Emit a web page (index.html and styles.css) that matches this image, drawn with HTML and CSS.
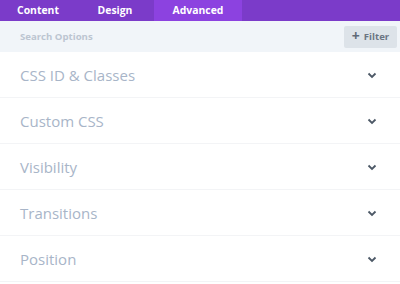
FILE: index.html
```html
<!DOCTYPE html>
<html>
<head>
<meta charset="utf-8">
<link rel="stylesheet" href="styles.css">
</head>
<body>
<div class="panel">
  <nav class="tabs">
    <div class="tab">Content</div>
    <div class="tab">Design</div>
    <div class="tab active">Advanced</div>
  </nav>
  <div class="search">
    <span class="search-label">Search Options</span>
    <button class="filter"><span class="plus">+</span><span>Filter</span></button>
  </div>
  <div class="groups">
    <div class="group"><span class="title">CSS ID &amp; Classes</span><svg class="chev" width="10" height="7" viewBox="0 0 10 7"><path d="M1.5 1.5 L5 5 L8.5 1.5" fill="none" stroke="#4c5866" stroke-width="1.8"/></svg></div>
    <div class="group"><span class="title">Custom CSS</span><svg class="chev" width="10" height="7" viewBox="0 0 10 7"><path d="M1.5 1.5 L5 5 L8.5 1.5" fill="none" stroke="#4c5866" stroke-width="1.8"/></svg></div>
    <div class="group"><span class="title">Visibility</span><svg class="chev" width="10" height="7" viewBox="0 0 10 7"><path d="M1.5 1.5 L5 5 L8.5 1.5" fill="none" stroke="#4c5866" stroke-width="1.8"/></svg></div>
    <div class="group"><span class="title">Transitions</span><svg class="chev" width="10" height="7" viewBox="0 0 10 7"><path d="M1.5 1.5 L5 5 L8.5 1.5" fill="none" stroke="#4c5866" stroke-width="1.8"/></svg></div>
    <div class="group"><span class="title">Position</span><svg class="chev" width="10" height="7" viewBox="0 0 10 7"><path d="M1.5 1.5 L5 5 L8.5 1.5" fill="none" stroke="#4c5866" stroke-width="1.8"/></svg></div>
  </div>
</div>
</body>
</html>
```
FILE: styles.css
```css
html, body { margin: 0; padding: 0; background: #fff; }
body { font-family: "Open Sans", "Noto Sans", sans-serif; width: 400px; height: 284px; overflow: hidden; }
.panel { width: 400px; }
.tabs { display: flex; height: 21px; background: #7b3bc9; }
.tab { color: #fff; font-weight: 700; font-size: 10.4px; display: flex; align-items: center; justify-content: center; height: 21px; line-height: 1; }
.tab:nth-child(1) { width: 76px; }
.tab:nth-child(2) { width: 78px; }
.tab.active { width: 88px; background: #8c42e0; }
.search { height: 31px; background: #f1f5f9; display: flex; align-items: center; justify-content: space-between; padding: 0 3px 0 20px; }
.search-label { color: #bcc5d1; font-weight: 700; font-size: 9.6px; }
.filter { border: 0; background: #dde3e9; color: #6b7583; font-family: inherit; font-weight: 700; font-size: 9.6px; height: 22px; width: 53px; padding: 0; display: flex; align-items: center; justify-content: center; gap: 4px; border-radius: 2px; }
.filter .plus { font-size: 14px; font-weight: 700; color: #5f6a78; line-height: 1; margin-top: -2px; }
.groups { display: flex; flex-direction: column; }
.group { height: 45px; border-bottom: 1px solid #f3f4f6; display: flex; align-items: center; justify-content: space-between; padding: 0 23px 0 20px; }
.title { color: #a8b5c8; font-size: 15px; }
.chev { display: block; margin-top: 1px; }
```
